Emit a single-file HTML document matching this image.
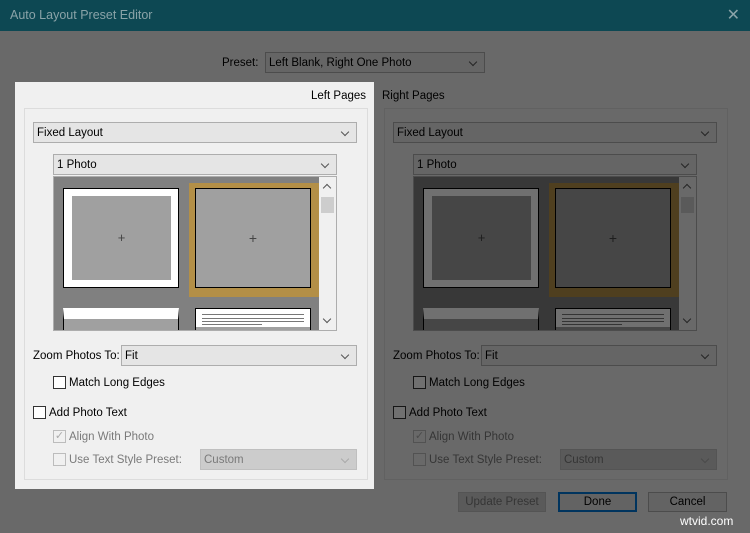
<!DOCTYPE html>
<html><head><meta charset="utf-8"><style>
*{box-sizing:border-box;margin:0;padding:0}
body{width:750px;height:533px;overflow:hidden;background:#f0f0f0;font-family:"Liberation Sans",sans-serif;font-size:11.5px;color:#000;position:relative}
.a{position:absolute}
.title{left:0;top:0;width:750px;height:31px;background:#0d4853;color:#8aa3a8;font-size:12.5px;line-height:31px;padding-left:10px}
.dd{position:absolute;background:#e5e5e5;border:1px solid #adadad;height:21px;line-height:21px;padding-left:3px;white-space:nowrap}
.dd:after{content:"";position:absolute;right:8px;top:6px;width:5px;height:5px;border-right:1px solid #555;border-bottom:1px solid #555;transform:rotate(45deg)}
.dd.dis{background:#cccccc;border-color:#bfbfbf;color:#7a7a7a}
.dd.dis:after{border-color:#aaa}
.cb{position:absolute;width:13px;height:13px;border:1px solid #333;background:#fff}
.cb.dis{border-color:#bcbcbc;background:#f0f0f0}
.lbl{position:absolute;white-space:nowrap;line-height:14px}
.g{color:#7a7a7a}
.btn{position:absolute;height:20px;border:1px solid #adadad;background:#e1e1e1;text-align:center;line-height:19px}
#ov{left:0;top:31px;width:750px;height:502px;background:rgba(0,0,0,0.56);z-index:5}
#lp{left:15px;top:82px;width:359px;height:407px;background:#f0f0f0;z-index:6}
.sa{position:absolute;left:5px;width:6px;height:6px;border-left:1.5px solid #555;border-top:1.5px solid #555}
</style></head><body>
<div class="a title">Auto Layout Preset Editor<span style="position:absolute;right:10px;top:0;font-size:16px">✕</span></div>
<div class="lbl" style="left:222px;top:56px">Preset:</div>
<div class="dd" style="left:265px;top:52px;width:220px">Left Blank, Right One Photo</div>

<div class="lbl" style="left:382px;top:89px">Right Pages</div>
<div class="a" id="rp" style="left:360px;top:0;width:390px;height:533px">
 <div class="a" style="left:24px;top:108px;width:344px;height:372px;border:1px solid #dcdcdc"></div>
 <div class="dd" style="left:33px;top:122px;width:324px">Fixed Layout</div>
 <div class="dd" style="left:53px;top:154px;width:284px">1 Photo</div>
 <div class="a" style="left:53px;top:176px;width:284px;height:155px;border:1px solid #adadad;background:#808080;overflow:hidden">
  <div class="a" style="right:0;top:0;width:17px;height:153px;background:#f0f0f0"><div class="a" style="left:2px;top:20px;width:13px;height:16px;background:#cdcdcd"></div><div class="sa" style="top:8px;transform:rotate(45deg)"></div><div class="sa" style="top:139px;transform:rotate(225deg)"></div></div>
  <div class="a" style="left:9px;top:11px;width:116px;height:100px;background:#fff;border:1px solid #000"><div class="a" style="left:8px;top:7px;width:99px;height:84px;background:#a0a0a0;text-align:center;line-height:84px;color:#444;font-size:13px">+</div></div>
  <div class="a" style="left:135px;top:6px;width:130px;height:114px;background:#b38f47"><div class="a" style="left:6px;top:5px;width:116px;height:100px;background:#a0a0a0;border:1px solid #000;text-align:center;line-height:98px;color:#444;font-size:14px">+</div></div>
  <div class="a" style="left:9px;top:131px;width:116px;height:30px;background:#a0a0a0;border:1px solid #000;border-top:11px solid #fff"></div>
  <div class="a" style="left:141px;top:131px;width:116px;height:30px;background:#fff;border:1px solid #000"><div class="a" style="left:6px;top:5px;width:102px;height:8px;border-top:1px solid #777;border-bottom:1px solid #777"></div><div class="a" style="left:6px;top:9px;width:102px;height:1px;background:#777"></div><div class="a" style="left:6px;top:15px;width:60px;height:1px;background:#777"></div><div class="a" style="left:0;top:18px;width:114px;height:12px;background:#a0a0a0"></div></div>
 </div>
 <div class="lbl" style="left:33px;top:349px">Zoom Photos To:</div>
 <div class="dd" style="left:121px;top:345px;width:236px">Fit</div>
 <div class="cb" style="left:53px;top:376px"></div><div class="lbl" style="left:69px;top:376px">Match Long Edges</div>
 <div class="cb" style="left:33px;top:406px"></div><div class="lbl" style="left:49px;top:406px">Add Photo Text</div>
 <div class="cb dis" style="left:53px;top:430px;color:#aaa;font-size:11px;line-height:11px;text-align:center">✓</div><div class="lbl g" style="left:69px;top:430px">Align With Photo</div>
 <div class="cb dis" style="left:53px;top:453px"></div><div class="lbl g" style="left:69px;top:453px">Use Text Style Preset:</div>
 <div class="dd dis" style="left:200px;top:449px;width:157px">Custom</div>
</div>
<div class="btn g" style="left:458px;top:492px;width:88px;background:#cccccc;border-color:#bfbfbf">Update Preset</div>
<div class="btn" style="left:558px;top:492px;width:79px;border:2px solid #0078d7;line-height:17px">Done</div>
<div class="btn" style="left:648px;top:492px;width:79px">Cancel</div>

<div class="a" id="ov"></div>

<div class="a" id="lp">
 <div class="lbl" style="right:8px;top:7px">Left Pages</div>
 <div class="a" style="left:-15px;top:-82px;width:390px;height:533px">
 <div class="a" style="left:24px;top:108px;width:344px;height:372px;border:1px solid #dcdcdc"></div>
 <div class="dd" style="left:33px;top:122px;width:324px">Fixed Layout</div>
 <div class="dd" style="left:53px;top:154px;width:284px">1 Photo</div>
 <div class="a" style="left:53px;top:176px;width:284px;height:155px;border:1px solid #adadad;background:#808080;overflow:hidden">
  <div class="a" style="right:0;top:0;width:17px;height:153px;background:#f0f0f0"><div class="a" style="left:2px;top:20px;width:13px;height:16px;background:#cdcdcd"></div><div class="sa" style="top:8px;transform:rotate(45deg)"></div><div class="sa" style="top:139px;transform:rotate(225deg)"></div></div>
  <div class="a" style="left:9px;top:11px;width:116px;height:100px;background:#fff;border:1px solid #000"><div class="a" style="left:8px;top:7px;width:99px;height:84px;background:#a0a0a0;text-align:center;line-height:84px;color:#444;font-size:13px">+</div></div>
  <div class="a" style="left:135px;top:6px;width:130px;height:114px;background:#b38f47"><div class="a" style="left:6px;top:5px;width:116px;height:100px;background:#a0a0a0;border:1px solid #000;text-align:center;line-height:98px;color:#444;font-size:14px">+</div></div>
  <div class="a" style="left:9px;top:131px;width:116px;height:30px;background:#a0a0a0;border:1px solid #000;border-top:11px solid #fff"></div>
  <div class="a" style="left:141px;top:131px;width:116px;height:30px;background:#fff;border:1px solid #000"><div class="a" style="left:6px;top:5px;width:102px;height:8px;border-top:1px solid #777;border-bottom:1px solid #777"></div><div class="a" style="left:6px;top:9px;width:102px;height:1px;background:#777"></div><div class="a" style="left:6px;top:15px;width:60px;height:1px;background:#777"></div><div class="a" style="left:0;top:18px;width:114px;height:12px;background:#a0a0a0"></div></div>
 </div>
 <div class="lbl" style="left:33px;top:349px">Zoom Photos To:</div>
 <div class="dd" style="left:121px;top:345px;width:236px">Fit</div>
 <div class="cb" style="left:53px;top:376px"></div><div class="lbl" style="left:69px;top:376px">Match Long Edges</div>
 <div class="cb" style="left:33px;top:406px"></div><div class="lbl" style="left:49px;top:406px">Add Photo Text</div>
 <div class="cb dis" style="left:53px;top:430px;color:#aaa;font-size:11px;line-height:11px;text-align:center">✓</div><div class="lbl g" style="left:69px;top:430px">Align With Photo</div>
 <div class="cb dis" style="left:53px;top:453px"></div><div class="lbl g" style="left:69px;top:453px">Use Text Style Preset:</div>
 <div class="dd dis" style="left:200px;top:449px;width:157px">Custom</div>
 </div>
</div>
<div class="lbl" style="left:680px;top:514px;color:#fff;font-size:12px;z-index:7">wtvid.com</div>
</body></html>
